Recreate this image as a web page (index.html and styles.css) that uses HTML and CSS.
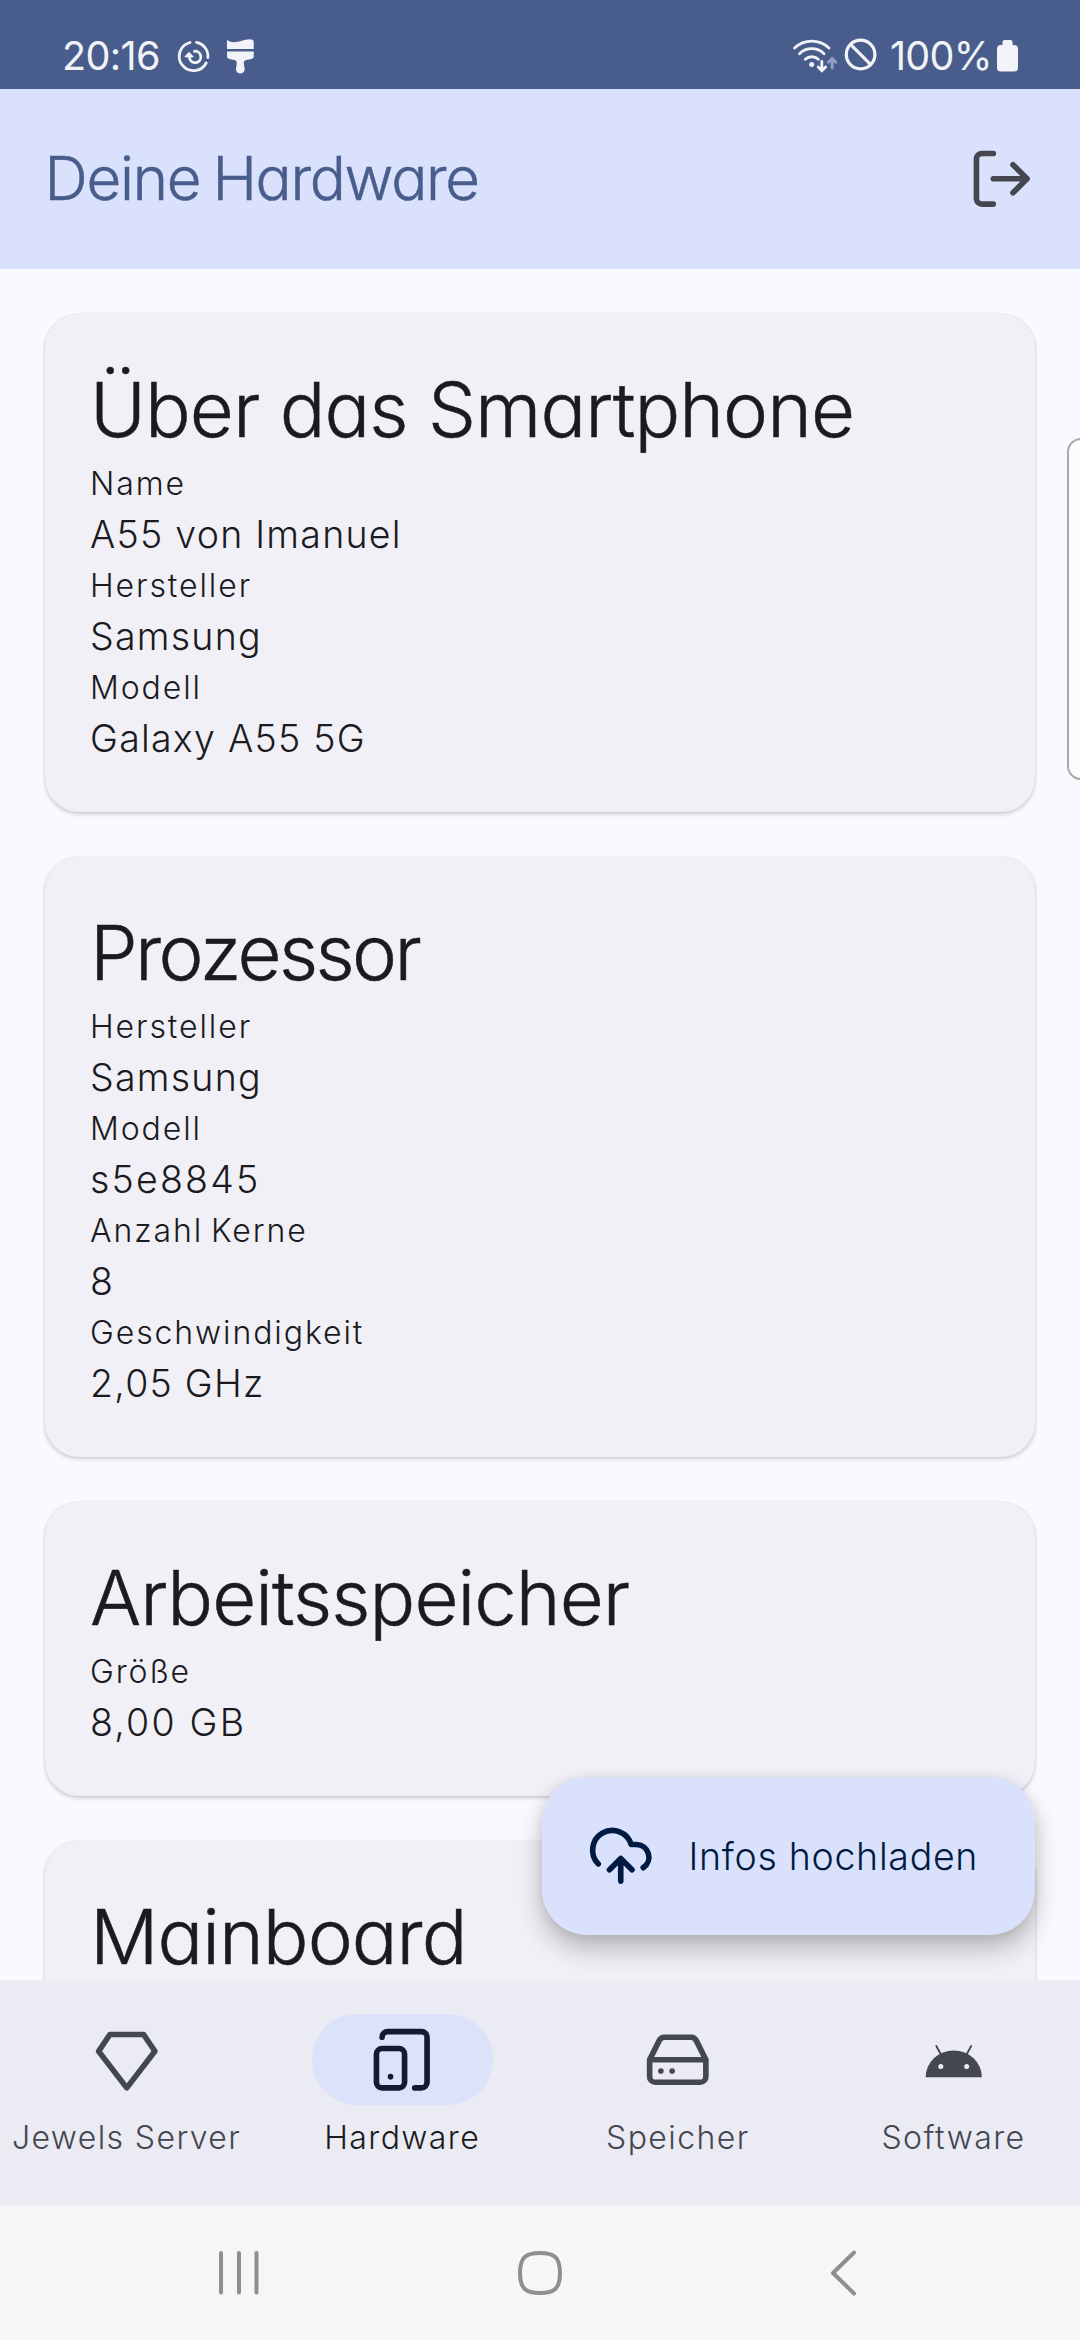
FILE: index.html
```html
<!DOCTYPE html>
<html lang="de">
<head>
<meta charset="utf-8">
<title>Deine Hardware</title>
<link rel="stylesheet" href="styles.css">
</head>
<body>
<div class="screen">
  <div class="status">
    <span class="clock">20:16</span>
    <svg class="status-left" width="84" height="42" viewBox="0 0 84 42" fill="none">
      <g stroke="#f2f3f8" stroke-width="2.8" stroke-linecap="round">
        <path d="M16 7.5A14.3 14.3 0 1 0 32.2 28"/>
        <path d="M22.5 7.3A14.3 14.3 0 0 1 33.9 22.6"/>
        <path d="M20.3 16.3a5.7 5.7 0 1 1-4.7 7"/>
      </g>
      <path d="M10.3 21.8 15 16.8 19.8 21.8c-2 1.2-7.5 1.2-9.5 0z" fill="#f2f3f8"/>
      <g fill="#f2f3f8">
        <path d="M53 5q3 2.3 7 2.3c6 0 10-3 15.5-3q3.5.2 4.2 1.7v7.9H53z"/>
        <path d="M53 16.5H79.7v6q-1 1.6-7.5 2.6-2.8.7-2.3 4l.8 5a4.400 4.400 0 0 1-8.800 0l.8-5q.5-3.300-2.300-4-6.400-1-7.400-2.600z"/>
      </g>
    </svg>
    <span class="grow"></span>
    <svg class="status-right" width="100" height="40" viewBox="0 0 100 40" fill="none" stroke="#f2f3f8" stroke-width="2.8" stroke-linecap="round">
      <path d="M4.500 14a25 25 0 0 1 34.500 0M9.500 19.700a17.500 17.500 0 0 1 24.500 0M15.300 25.300a9.500 9.500 0 0 1 13 0"/>
      <circle cx="21.7" cy="30.5" r="2.5" fill="#f2f3f8" stroke="none"/>
      <path d="M31.800 27.500v9M28.200 33l3.700 3.700 3.700-3.700"/>
      <path d="M42.200 34v-9.500M38.500 28.300l3.700-3.700 3.700 3.700" stroke="#93a0c2"/>
      <circle cx="70.600" cy="20.500" r="14.300" stroke-width="3.200"/>
      <path d="M60.500 10.400 80.700 30.600" stroke-width="3.200"/>
    </svg>
    <span class="percent">100%</span>
    <svg class="battery" width="21" height="32" viewBox="0 0 21 32" fill="#f2f3f8"><path d="M5.500 5V2q0-2 2-2h6q2 0 2 2v3H17q4 0 4 4v19q0 3.500-4 3.500H4q-4 0-4-3.500V9q0-4 4-4z"/></svg>
  </div>

  <header class="topbar">
    <h1 class="topbar-title">Deine Hardware</h1>
    <svg class="icon" viewBox="0 0 24 24"><path d="M9 21H5a2 2 0 0 1-2-2V5a2 2 0 0 1 2-2h4M16 17l5-5-5-5M21 12H9"/></svg>
  </header>

  <main class="content">
    <section class="card">
      <h2 class="card-title">Über das Smartphone</h2>
      <dl class="facts">
        <dt>Name</dt><dd>A55 von Imanuel</dd>
        <dt>Hersteller</dt><dd>Samsung</dd>
        <dt>Modell</dt><dd>Galaxy A55 5G</dd>
      </dl>
    </section>
    <section class="card">
      <h2 class="card-title tight">Prozessor</h2>
      <dl class="facts">
        <dt>Hersteller</dt><dd>Samsung</dd>
        <dt>Modell</dt><dd class="num">s5e8845</dd>
        <dt>Anzahl Kerne</dt><dd class="num">8</dd>
        <dt>Geschwindigkeit</dt><dd>2,05 GHz</dd>
      </dl>
    </section>
    <section class="card">
      <h2 class="card-title">Arbeitsspeicher</h2>
      <dl class="facts">
        <dt>Größe</dt><dd class="num">8,00 GB</dd>
      </dl>
    </section>
    <section class="card">
      <h2 class="card-title">Mainboard</h2>
    </section>
    <button class="fab">
      <svg class="icon" viewBox="0 0 24 24"><path d="M12 13v8M4 14.899A7 7 0 1 1 15.710 8h1.790a4.500 4.500 0 0 1 2.500 8.242M8 17l4-4 4 4"/></svg>
      <span class="fab-label">Infos hochladen</span>
    </button>
  </main>

  <nav class="tabs">
    <a class="tab">
      <span class="pill"><svg class="icon" viewBox="0 0 24 24"><path d="M6 3h12l4 6-10 13L2 9z"/></svg></span>
      <span class="tab-label">Jewels Server</span>
    </a>
    <a class="tab active">
      <span class="pill"><svg class="icon" viewBox="0 0 24 24"><rect x="3" y="8" width="10" height="14" rx="2"/><path d="M5 4a2 2 0 0 1 2-2h12a2 2 0 0 1 2 2v16a2 2 0 0 1-2 2h-2.400M8 18h.010"/></svg></span>
      <span class="tab-label">Hardware</span>
    </a>
    <a class="tab">
      <span class="pill"><svg class="icon" viewBox="0 0 24 24"><path d="M22 12H2M5.450 5.110 2 12v6a2 2 0 0 0 2 2h16a2 2 0 0 0 2-2v-6l-3.450-6.890A2 2 0 0 0 16.760 4H7.240a2 2 0 0 0-1.790 1.110zM6 16h.010M10 16h.010"/></svg></span>
      <span class="tab-label">Speicher</span>
    </a>
    <a class="tab">
      <span class="pill"><svg class="icon" viewBox="0 0 24 24"><path d="M2 18.200a10 9.500 0 0 1 20 0z" fill="currentColor" stroke="none"/><path d="M7.500 10.200 5.800 7.100M16.500 10.200 18.200 7.100" stroke-width=".65"/><circle class="eye" cx="7.400" cy="14.400" r=".9"/><circle class="eye" cx="16.600" cy="14.400" r=".9"/></svg></span>
      <span class="tab-label">Software</span>
    </a>
  </nav>

  <div class="sysnav">
    <svg width="46" height="46" viewBox="0 0 46 46"><path d="M5 3v39.500M23 3v39.500M40.500 3v39.500"/></svg>
    <svg width="46" height="46" viewBox="0 0 46 46"><path d="M23 3C37 3 43 7 43 23S37 43 23 43 3 39 3 23 9 3 23 3z"/></svg>
    <svg width="46" height="46" viewBox="0 0 46 46"><path d="M36 2.500 15 23l21 20.500"/></svg>
  </div>
  <div class="edge-handle"></div>
</div>
</body>
</html>
```
FILE: styles.css
```css
* { box-sizing: border-box; margin: 0; padding: 0; }
body { font-family: Inter, "Open Sans", sans-serif; font-weight: 320; color: #1b1b1f; }
.screen { position: relative; width: 1080px; height: 2340px; overflow: hidden; display: flex; flex-direction: column; background: #faf9ff; }

.status { height: 89px; flex: none; display: flex; align-items: flex-start; padding: 0 62px; background: #495d8c; color: #f2f3f8; }
.clock, .percent { font-size: 39.5px; line-height: 48px; margin-top: 32px; font-weight: 400; white-space: nowrap; }
.clock { width: 97px; letter-spacing: -0.6px; }
.percent { width: 107px; letter-spacing: -0.7px; }
.status-left { margin: 35px 0 0 15px; }
.status-right { margin-top: 34px; }
.battery { margin-top: 40px; }
.grow { flex: 1; }

.topbar { height: 180px; flex: none; display: flex; align-items: center; justify-content: space-between; padding: 0 44.5px; background: #dae1fc; color: #44474f; }
.topbar-title { font-size: 60px; font-weight: 340; line-height: 70px; padding-bottom: 2px; letter-spacing: -1.25px; word-spacing: -3.5px; color: #495d8c; -webkit-text-stroke: 0.5px currentColor; font-feature-settings: "cv11"; }
.icon { width: 67.5px; height: 67.5px; flex: none; display: block; fill: none; stroke: currentColor; stroke-width: 2; stroke-linecap: round; stroke-linejoin: round; }

.content { position: relative; height: 1711px; flex: none; overflow: hidden; display: flex; flex-direction: column; gap: 44.5px; padding: 44.5px 45px 0; }
.card { flex: none; padding: 53px 45px 48px; border-radius: 34px; background: #f1f0f6; box-shadow: 0 2px 4px rgba(0,0,0,.18), 0 0 2px rgba(0,0,0,.1); }
.card-title { height: 91.5px; font-size: 76px; font-weight: 340; line-height: 84px; letter-spacing: -0.95px; white-space: nowrap; -webkit-text-stroke: 0.5px currentColor; font-feature-settings: "cv11"; }
.card-title.tight { letter-spacing: -2.6px; }
.facts dt { height: 51px; line-height: 51px; font-size: 32px; letter-spacing: 1.9px; word-spacing: -3px; white-space: nowrap; }
.facts dd { height: 51px; line-height: 51px; font-size: 37.5px; letter-spacing: 1.25px; white-space: nowrap; }
.facts dd.num { letter-spacing: 2.2px; }

.fab { position: absolute; right: 45px; bottom: 45px; width: 493px; height: 158px; display: flex; align-items: center; gap: 34px; padding: 0 45px; border: 0; border-radius: 45px; background: #dae1fc; color: #001a41; font: inherit; font-size: 37.5px; letter-spacing: 0.7px; box-shadow: 0 14px 26px rgba(0,0,0,.24), 0 2px 12px rgba(0,0,0,.08); }
.fab-label { white-space: nowrap; }

.tabs { height: 225px; flex: none; display: grid; grid-template-columns: repeat(4, minmax(0, 1fr)); column-gap: 22.5px; background: #ebebf4; color: #44474f; }
.tab { display: flex; flex-direction: column; align-items: center; padding-top: 34px; }
.pill { width: 181px; height: 91px; display: flex; align-items: center; justify-content: center; border-radius: 45px; }
.active { color: #1b1b1f; }
.active .pill { background: #dce2f9; color: #151b2c; }
.eye { fill: #ebebf4; stroke: none; }
.tab-label { margin-top: 10px; font-size: 32px; line-height: 45px; letter-spacing: 1.4px; white-space: nowrap; }

.sysnav { height: 135px; flex: none; display: flex; justify-content: space-between; align-items: center; padding: 0 216px; background: #f6f6f8; fill: none; stroke: #8f8f8f; stroke-width: 4; stroke-linecap: round; stroke-linejoin: round; }
.edge-handle { position: absolute; left: 1067px; top: 438px; width: 30px; height: 342px; border: 2px solid #a9a9a9; border-radius: 14px; background: #fcfcfe; }
```
